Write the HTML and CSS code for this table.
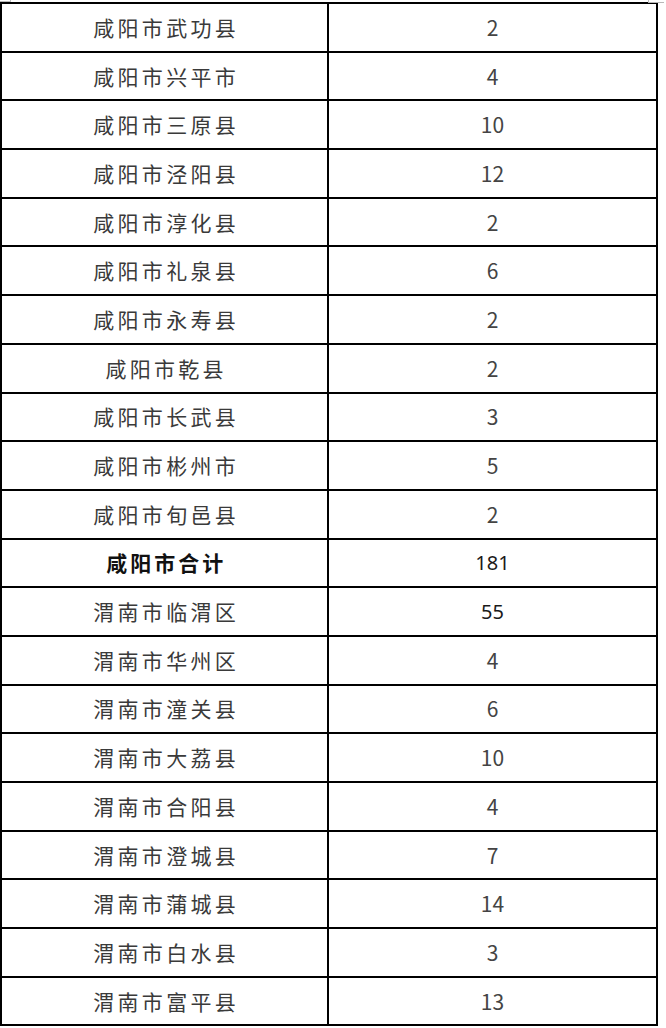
FILE: index.html
```html
<!DOCTYPE html>
<html lang="zh-CN">
<head>
<meta charset="utf-8">
<title>咸阳市 渭南市</title>
<link rel="stylesheet" href="styles.css">
</head>
<body>
<div class="page">
  <span class="mark mark-left"></span>
  <span class="mark mark-right"></span>
  <table class="stats">
    <colgroup><col class="c1"><col class="c2"></colgroup>
    <tbody>
      <tr><td class="name">咸阳市武功县</td><td class="num">2</td></tr>
      <tr><td class="name">咸阳市兴平市</td><td class="num">4</td></tr>
      <tr><td class="name">咸阳市三原县</td><td class="num">10</td></tr>
      <tr><td class="name">咸阳市泾阳县</td><td class="num">12</td></tr>
      <tr><td class="name">咸阳市淳化县</td><td class="num">2</td></tr>
      <tr><td class="name">咸阳市礼泉县</td><td class="num">6</td></tr>
      <tr><td class="name">咸阳市永寿县</td><td class="num">2</td></tr>
      <tr><td class="name">咸阳市乾县</td><td class="num">2</td></tr>
      <tr><td class="name">咸阳市长武县</td><td class="num">3</td></tr>
      <tr><td class="name">咸阳市彬州市</td><td class="num">5</td></tr>
      <tr><td class="name">咸阳市旬邑县</td><td class="num">2</td></tr>
      <tr class="total"><td class="name">咸阳市合计</td><td class="num alt">181</td></tr>
      <tr><td class="name">渭南市临渭区</td><td class="num alt">55</td></tr>
      <tr><td class="name">渭南市华州区</td><td class="num">4</td></tr>
      <tr><td class="name">渭南市潼关县</td><td class="num">6</td></tr>
      <tr><td class="name">渭南市大荔县</td><td class="num">10</td></tr>
      <tr><td class="name">渭南市合阳县</td><td class="num">4</td></tr>
      <tr><td class="name">渭南市澄城县</td><td class="num">7</td></tr>
      <tr><td class="name">渭南市蒲城县</td><td class="num">14</td></tr>
      <tr><td class="name">渭南市白水县</td><td class="num">3</td></tr>
      <tr><td class="name">渭南市富平县</td><td class="num">13</td></tr>
    </tbody>
  </table>
</div>
</body>
</html>
```
FILE: styles.css
```css
html, body {
  margin: 0;
  padding: 0;
  background: #ffffff;
}

.page {
  position: relative;
  padding-top: 2px;
  width: 666px;
}

.mark {
  position: absolute;
  top: 0;
  height: 1px;
  border-bottom: 1px solid #b8b8b8;
}

.mark-left {
  left: 0;
  width: 10px;
  border-right: 1px solid #b8b8b8;
}

.mark-right {
  left: 648px;
  width: 15px;
  border-left: 1px solid #b8b8b8;
  height: 2px;
}

.stats {
  border-collapse: collapse;
  table-layout: fixed;
  width: 658px;
  border: 2px solid #000;
  font-family: "Noto Sans CJK SC", "Noto Sans", sans-serif;
  color: #3a3a3a;
}

.c1 { width: 327px; }
.c2 { width: 329px; }

.stats tr {
  height: 48.7px;
}

.stats td {
  border: 2px solid #000;
  padding: 0;
  text-align: center;
  vertical-align: middle;
  font-size: 21px;
  line-height: 1;
}

.name {
  letter-spacing: 3.3px;
  text-indent: 3.3px;
  font-weight: 400;
}

.num {
  font-weight: 400;
  color: #444;
}

.total .name {
  font-weight: 700;
  color: #111;
  letter-spacing: 3px;
}

.num.alt {
  color: #1a1a1a;
  font-family: "Noto Sans", sans-serif;
  font-weight: 400;
  font-size: 20px;
}
```
